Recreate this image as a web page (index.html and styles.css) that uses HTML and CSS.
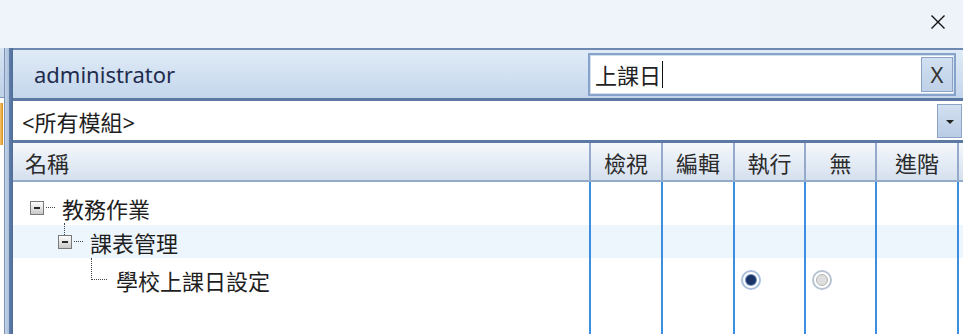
FILE: index.html
```html
<!DOCTYPE html>
<html lang="zh-Hant">
<head>
<meta charset="utf-8">
<title>權限設定</title>
<link rel="stylesheet" href="styles.css">
</head>
<body>
<div class="app">
  <div class="titlebar">
    <svg class="close" width="16" height="16" viewBox="0 0 16 16"><path d="M1.5 1.5L14.5 14.5M14.5 1.5L1.5 14.5" stroke="#111" stroke-width="1.4" fill="none"/></svg>
  </div>
  <div class="main">
    <div class="side">
      <div class="side-top"></div>
      <div class="side-tab"></div>
    </div>
    <div class="splitter"></div>
    <div class="panel">
      <div class="userbar">
        <span class="user">administrator</span>
        <div class="search">
          <span class="search-text">上課日</span><span class="caret"></span>
          <span class="clear">X</span>
        </div>
      </div>
      <div class="module">
        <span class="module-text">&lt;所有模組&gt;</span>
        <span class="drop"><span class="tri"></span></span>
      </div>
      <div class="grid-head">
        <div class="h name">名稱</div>
        <div class="h">檢視</div>
        <div class="h">編輯</div>
        <div class="h">執行</div>
        <div class="h">無</div>
        <div class="h">進階</div>
        <div class="h"></div>
      </div>
      <div class="grid-body">
        <div class="row pad"><div class="c"></div><div class="c"></div><div class="c"></div><div class="c"></div><div class="c"></div><div class="c"></div><div class="c"></div></div>
        <div class="row r1">
          <div class="c tree lvl0"><span class="tog"></span><span class="dots"></span><span class="label">教務作業</span></div>
          <div class="c"></div><div class="c"></div><div class="c"></div><div class="c"></div><div class="c"></div><div class="c"></div>
        </div>
        <div class="row r2 alt">
          <div class="c tree lvl1"><span class="tog child"></span><span class="dots"></span><span class="label">課表管理</span></div>
          <div class="c"></div><div class="c"></div><div class="c"></div><div class="c"></div><div class="c"></div><div class="c"></div>
        </div>
        <div class="row r3">
          <div class="c tree lvl2"><span class="elbow"></span><span class="label">學校上課日設定</span></div>
          <div class="c"></div><div class="c"></div>
          <div class="c opt"><span class="radio on"></span></div>
          <div class="c opt"><span class="radio off"></span></div>
          <div class="c"></div><div class="c"></div>
        </div>
        <div class="row fill"><div class="c"></div><div class="c"></div><div class="c"></div><div class="c"></div><div class="c"></div><div class="c"></div><div class="c"></div></div>
      </div>
    </div>
  </div>
</div>
</body>
</html>
```
FILE: styles.css
```css
html, body {
  margin: 0;
  padding: 0;
}
body {
  width: 963px;
  height: 334px;
  overflow: hidden;
  background: #fff;
  font-family: "Noto Sans", "Noto Sans CJK TC", sans-serif;
  font-size: 22px;
  color: #1e1e1e;
}
.app {
  display: flex;
  flex-direction: column;
  height: 334px;
}
.titlebar {
  flex: none;
  height: 48px;
  box-sizing: border-box;
  background: linear-gradient(90deg, #eef4f9, #edf3f9);
  display: flex;
  justify-content: flex-end;
  align-items: center;
  padding: 0 17px 4px 0;
}
.main {
  flex: 1;
  display: flex;
  min-height: 0;
}
.side {
  width: 4px;
  flex: none;
  display: flex;
  flex-direction: column;
}
.side-top {
  height: 49px;
  background: linear-gradient(#d6e3f2, #bfd1e8);
  border-bottom: 1px solid #7f97b9;
}
.side-tab {
  margin-top: 5px;
  width: 3px;
  height: 42px;
  background: linear-gradient(90deg, #f5c76e, #d88a1e);
}
.splitter {
  width: 8px;
  flex: none;
  border-left: 1px solid #7c93b6;
  background: linear-gradient(90deg, #c3d3e8 0, #a8bedb 4px, #607da7 4px, #4f6d99 8px);
}
.panel {
  flex: 1;
  min-width: 0;
  display: flex;
  flex-direction: column;
}
.userbar {
  flex: none;
  height: 48px;
  border-top: 2px solid #6d89b0;
  border-bottom: 3px solid #5b79a3;
  background: linear-gradient(#e0ebf7, #c4d6ec);
  display: flex;
  align-items: center;
  justify-content: space-between;
  padding: 0 7px 0 21px;
}
.user {
  color: #1f2c4f;
}
.search {
  width: 368px;
  height: 43px;
  box-sizing: border-box;
  border: 2px solid #86a3ca;
  box-shadow: inset 0 0 0 1px #d4e0ef;
  background: #fff;
  display: flex;
  align-items: center;
  padding: 2px 1px 2px 5px;
}
.search-text {
  color: #222;
}
.caret {
  width: 1px;
  height: 27px;
  background: #111;
  margin-left: 1px;
}
.clear {
  margin-left: auto;
  width: 32px;
  height: 35px;
  box-sizing: border-box;
  border: 1px solid #8aa3c6;
  background: linear-gradient(#d2e0f0, #bfd1e8);
  color: #333;
  font-size: 22px;
  display: flex;
  align-items: center;
  justify-content: center;
}
.module {
  flex: none;
  height: 39px;
  border-bottom: 3px solid #5b79a3;
  display: flex;
  align-items: center;
  padding: 0 1px 0 9px;
  background: #fff;
}
.module-text {
  color: #1e1e1e;
}
.drop {
  margin-left: auto;
  width: 25px;
  height: 34px;
  box-sizing: border-box;
  border: 1px solid #8aa3c6;
  background: linear-gradient(#d3e0f0, #b9cce5);
  display: flex;
  align-items: center;
  justify-content: center;
}
.tri {
  width: 0;
  height: 0;
  border-left: 4px solid transparent;
  border-right: 4px solid transparent;
  border-top: 4px solid #222;
  margin-top: 2px;
}
.grid-head,
.row {
  display: grid;
  grid-template-columns: 576px 72px 72px 71px 71px 82px 1fr;
}
.grid-head {
  flex: none;
  height: 37px;
  border-bottom: 2px solid #94abcb;
  background: linear-gradient(#f5f8fc, #d5e0ee);
}
.h {
  box-sizing: border-box;
  border-left: 2px solid #95aaca;
  display: flex;
  align-items: center;
  justify-content: center;
  color: #2b2b2b;
}
.h.name {
  border-left: none;
  justify-content: flex-start;
  padding-left: 12px;
}
.grid-body {
  flex: 1;
  display: flex;
  flex-direction: column;
  min-height: 0;
}
.c {
  box-sizing: border-box;
  border-left: 2px solid #3d8ee2;
}
.c:first-child {
  border-left: none;
}
.row.pad { height: 8px; }
.row.r1 { height: 35px; }
.row.r2 { height: 33px; }
.row.r3 { height: 37px; }
.row.fill { flex: 1; }
.row.alt { background: #edf5fd; }
.tree {
  display: flex;
  align-items: center;
  position: relative;
}
.lvl0 { padding-left: 17px; }
.lvl1 { padding-left: 45px; }
.lvl2 { padding-left: 78px; }
.tog {
  flex: none;
  position: relative;
  width: 14px;
  height: 14px;
  box-sizing: border-box;
  border: 1px solid #7a7a7a;
  background: linear-gradient(#ffffff, #c8c8c8);
}
.tog::after {
  content: "";
  position: absolute;
  left: 3px;
  top: 5px;
  width: 6px;
  height: 2px;
  background: #2a2a2a;
}
.tog.child::before {
  content: "";
  position: absolute;
  left: 5px;
  top: -13px;
  height: 12px;
  border-left: 1px dotted #444;
}
.dots {
  flex: none;
  width: 9px;
  border-top: 1px dotted #444;
  margin: 0 7px 0 2px;
}
.elbow {
  flex: none;
  width: 16px;
  height: 22px;
  box-sizing: border-box;
  border-left: 1px dotted #444;
  border-bottom: 1px dotted #444;
  margin: 0 9px 22px 0;
}
.label {
  color: #1e1e1e;
  white-space: nowrap;
}
.opt {
  display: flex;
  align-items: center;
  padding-left: 6px;
}
.radio {
  width: 20px;
  height: 20px;
  box-sizing: border-box;
  border-radius: 50%;
  border: 2px solid #a9bfdd;
  background: #fff;
  display: flex;
  align-items: center;
  justify-content: center;
}
.radio.on::after {
  content: "";
  width: 10px;
  height: 10px;
  border-radius: 50%;
  background: #1b3466;
  box-shadow: 0 0 0 1px #6d8dbd;
}
.radio.off {
  border-color: #b7c3d3;
}
.radio.off::after {
  content: "";
  width: 12px;
  height: 12px;
  box-sizing: border-box;
  border-radius: 50%;
  background: #dedede;
  border: 1px solid #b3b3b3;
}
```
